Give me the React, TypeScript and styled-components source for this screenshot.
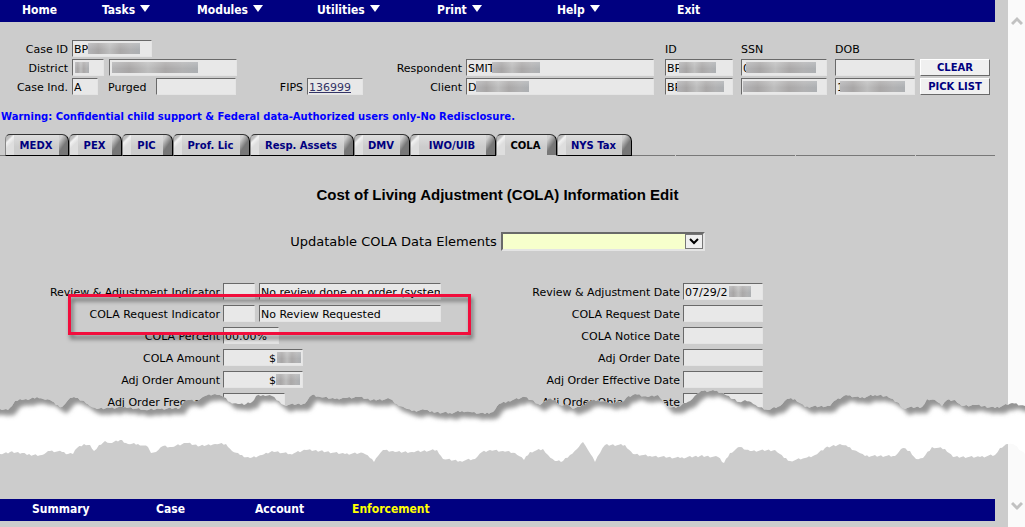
import React, { useId } from "react";
import styled, { createGlobalStyle, css } from "styled-components";

const GlobalStyle = createGlobalStyle`
  * { box-sizing: border-box; }
  html, body { margin: 0; padding: 0; }
  body {
    background: #cccccc;
    color: #000;
    font-family: "DejaVu Sans", Verdana, sans-serif;
    font-size: 11px;
    line-height: 17px;
  }
`;

const Page = styled.div`
  position: relative;
  display: flex;
  min-height: 100vh;
  overflow: hidden;
`;

const Main = styled.main`
  flex: 1;
  min-width: 0;
  display: flex;
  flex-direction: column;
  padding-right: 13px;
`;

const NavBar = styled.nav<{ $bottom?: boolean }>`
  display: flex;
  height: 22px;
  flex: none;
  padding: 0 0 2px ${(p) => (p.$bottom ? 32 : 22)}px;
  background: #000080;
  ${(p) => p.$bottom && css`margin-top: auto; margin-bottom: 6px;`}
`;

const NavLink = styled.a<{ $width: number; $active?: boolean }>`
  display: flex;
  gap: 5px;
  width: ${(p) => p.$width}px;
  color: ${(p) => (p.$active ? "#ffff00" : "#fff")};
  font: bold 12px/20px "DejaVu Sans Condensed", Tahoma, sans-serif;
  text-decoration: none;
`;

const Caret = styled.span`
  margin-top: 5px;
  height: 7px;
  border: 5px solid transparent;
  border-top: 7px solid #fff;
  border-bottom: 0;
`;

const CaseHeader = styled.section`
  display: flex;
  padding: 18px 5px 0 0;
`;

const CaseGrid = styled.div<{ $columns: string; $gap: number; $before?: number; $grow?: boolean }>`
  display: grid;
  grid-template-columns: ${(p) => p.$columns};
  grid-template-rows: repeat(3, 17px);
  gap: 2px ${(p) => p.$gap}px;
  margin-left: ${(p) => p.$before ?? 0}px;
  flex: ${(p) => (p.$grow ? "1" : "none")};
`;

const Group = styled.div<{ $gap?: number }>`
  display: flex;
  gap: ${(p) => p.$gap ?? 5}px;
`;

const Label = styled.label<{ $start?: boolean }>`
  height: 17px;
  line-height: 19px;
  text-align: ${(p) => (p.$start ? "left" : "right")};
  white-space: nowrap;
`;

const Spacer = styled.span<{ $span: number }>`
  grid-column: span ${(p) => p.$span};
`;

const FieldBox = styled.span<{ $width?: number }>`
  position: relative;
  display: block;
  flex: none;
  width: ${(p) => (p.$width ? `${p.$width}px` : "100%")};
  height: 17px;
`;

const FieldInput = styled.input<{ $link?: boolean; $right?: number }>`
  display: block;
  width: 100%;
  height: 17px;
  padding: 1px ${(p) => p.$right ?? 0}px 0 1px;
  border: 1px solid #e4e4e4;
  border-top-color: #696969;
  border-left-color: #696969;
  border-radius: 0;
  outline: 0;
  background: #e8e8e8;
  color: ${(p) => (p.$link ? "#333366" : "#000")};
  font: inherit;
  text-align: ${(p) => (p.$right ? "right" : "left")};
  text-decoration: ${(p) => (p.$link ? "underline" : "none")};
`;

const Smudge = styled.span<{ $left: number; $width: number }>`
  position: absolute;
  top: 3px;
  left: ${(p) => p.$left}px;
  width: ${(p) => p.$width}px;
  height: 11px;
  background:
    linear-gradient(rgba(255, 255, 255, 0.2), transparent 60%),
    linear-gradient(90deg, #b4b4b6, #a8a6a6 20%, #bebebe 42%, #aaa8a8 62%, #b2b2b3 82%, #acafb2);
`;

const PushButton = styled.button`
  height: 17px;
  padding: 0;
  border: 1px solid #fff;
  border-right-color: #696969;
  border-bottom-color: #696969;
  background: #f0f0f0;
  color: #000080;
  font: bold 10px/15px "DejaVu Sans", Verdana, sans-serif;
`;

const Warning = styled.p`
  margin: 15px 0 10px 1px;
  color: #0000ff;
  font-size: 10px;
  font-weight: bold;
  line-height: 14px;
`;

const TabStrip = styled.nav`
  display: flex;
  padding-left: 5px;
  background: linear-gradient(90deg, #787878 119px, #cccccc 119px) 76px 21px / 120px 1px repeat-x;
`;

const Tab = styled.a<{ $width: number; $active?: boolean }>`
  width: ${(p) => p.$width}px;
  height: 22px;
  padding-right: 2px;
  border: 1px solid;
  border-color: #333 #000 ${(p) => (p.$active ? "#ccc" : "#000")} #888;
  border-radius: 5px 7px 0 0;
  background:
    linear-gradient(125deg, #cfcfcf 0 3px, #777 10px) right / 9px 100% no-repeat,
    linear-gradient(135deg, #bdbdbd 0 4px, #f2f2f2 6px, #dedede 10px) left / 8px 100% no-repeat,
    linear-gradient(#dedede, #cccccc 60%);
  color: ${(p) => (p.$active ? "#000" : "#000080")};
  font-size: 10px;
  font-weight: bold;
  line-height: 22px;
  text-align: center;
  text-decoration: none;
  white-space: nowrap;
`;

const Title = styled.h1`
  margin: 29px 0 26px;
  font: bold 15px/20px "Liberation Sans", Arial, sans-serif;
  text-align: center;
`;

const Picker = styled.div`
  display: flex;
  justify-content: center;
  align-items: center;
  gap: 4px;
  font-size: 13px;
  line-height: 21px;
`;

const SelectShell = styled.span`
  position: relative;
  width: 204px;
  height: 19px;
`;

const Select = styled.select`
  display: block;
  appearance: none;
  width: 100%;
  height: 100%;
  border: 2px solid #e4e4e4;
  border-top-color: #696969;
  border-left-color: #696969;
  border-radius: 0;
  background: #f7ffcc;
`;

const SelectButton = styled.span`
  position: absolute;
  top: 2px;
  right: 2px;
  width: 18px;
  height: 15px;
  display: grid;
  place-items: center;
  border: 1px solid #777;
  background: #f0f0f0;
  pointer-events: none;
`;

const FormColumns = styled.form`
  display: flex;
  margin-top: 31px;
`;

const FormColumn = styled.div<{ $width: number }>`
  width: ${(p) => p.$width}px;
  display: flex;
  flex-direction: column;
  gap: 5px;
`;

const FormRow = styled.div<{ $label: number }>`
  position: relative;
  display: grid;
  grid-template-columns: ${(p) => p.$label}px auto;
  justify-content: start;
  gap: 3px;
`;

const Callout = styled.span`
  position: absolute;
  z-index: 1;
  top: -11px;
  left: 68px;
  width: 403px;
  height: 41px;
  border: 3px solid #f20d3c;
  filter: drop-shadow(2px 4px 2px rgba(0, 0, 0, 0.5));
  pointer-events: none;
`;

const ScrollTrack = styled.div`
  width: 17px;
  flex: none;
  display: flex;
  flex-direction: column;
  align-items: center;
  justify-content: space-between;
  padding: 16px 0;
  background: #fafafa;
`;

const Tear = styled.svg`
  position: absolute;
  z-index: 2;
  top: 385px;
  left: 0;
  width: 100%;
  height: 85px;
  pointer-events: none;
`;

type Point = [number, number];

const upperEdge: Point[] = [
  [0,409],[8,410],[12,406],[15,401],[20,399],[28,400],[37,397],[43,399],[50,400],[56,405],[62,407],[65,404],[70,398],[76,398],[84,401],[90,406],[97,409],[110,408],[125,407],[145,410],[160,409],[180,408],[184,402],[188,400],[196,401],[205,396],[215,394],[222,396],[230,402],[238,404],[246,404],[252,402],[256,396],[263,395],[272,396],[279,401],[284,405],[303,404],[307,401],[312,395],[320,397],[335,399],[345,398],[358,397],[372,400],[390,399],[397,404],[405,408],[412,411],[425,410],[430,412],[450,413],[462,411],[470,412],[485,414],[493,412],[499,404],[508,401],[525,397],[531,400],[540,405],[548,399],[555,400],[560,405],[568,405],[573,409],[580,407],[590,401],[598,400],[610,403],[622,402],[626,398],[635,394],[648,397],[658,395],[662,400],[668,407],[676,408],[684,403],[690,401],[697,394],[703,391],[715,391],[723,393],[733,399],[739,402],[745,400],[751,402],[758,407],[768,410],[780,406],[787,399],[795,399],[805,407],[830,406],[834,401],[846,395],[860,398],[875,395],[887,396],[897,402],[903,408],[922,407],[927,399],[935,400],[942,406],[947,400],[955,400],[962,406],[975,405],[995,408],[1012,403],[1025,406],
];

const lowerEdge: Point[] = [
  [0,454],[10,452],[22,453],[27,455],[42,455],[50,451],[62,452],[68,454],[73,454],[77,448],[84,444],[90,445],[94,451],[99,445],[105,441],[110,443],[120,440],[128,444],[138,444],[148,447],[151,453],[156,452],[163,446],[172,447],[186,443],[200,446],[215,444],[226,444],[232,451],[240,455],[250,458],[262,455],[272,451],[290,454],[306,450],[320,451],[345,454],[363,453],[370,458],[374,462],[378,456],[383,450],[395,452],[412,452],[437,450],[443,459],[460,461],[475,459],[482,452],[490,450],[503,451],[515,453],[524,460],[530,452],[543,449],[548,455],[555,461],[563,461],[570,455],[577,449],[583,442],[588,450],[595,462],[600,453],[605,445],[625,445],[633,454],[650,456],[680,458],[700,456],[718,457],[724,463],[730,453],[740,447],[750,451],[775,450],[784,458],[790,461],[805,458],[815,455],[825,448],[840,444],[848,447],[858,452],[865,456],[895,456],[903,448],[910,451],[916,459],[923,458],[932,447],[945,449],[953,457],[980,457],[995,455],[1000,448],[1008,444],[1013,444],[1025,454],
];

// Adds small teeth between the main points so that the edge looks torn.
const roughen = (points: Point[]): Point[] =>
  points.flatMap(([x, y], i) => {
    const next = points[i + 1];
    if (!next) return [[x, y] as Point];
    const steps = Math.max(1, Math.floor((next[0] - x) / 2));
    return Array.from({ length: steps }, (_, s): Point => {
      const px = x + ((next[0] - x) * s) / steps;
      const tooth = s === 0 ? 0 : ((Math.floor(px) * 13 + i * 5) % 7) / 3 - 1;
      return [px, y + ((next[1] - y) * s) / steps + tooth];
    });
  });

const join = (points: Point[]) => points.map((p) => p.join(",")).join(" ");
const upper = roughen(upperEdge);
const gap = join([...upper, [1025, 406], ...roughen(lowerEdge).reverse()]);
const sheet = join([[-20, 350], [-20, 409], ...upper, [1045, 406], [1045, 350]]);

function TornPaper() {
  return (
    <Tear viewBox="0 385 1025 85" preserveAspectRatio="none" aria-hidden="true">
      <defs>
        <clipPath id="gap"><polygon points={gap} /></clipPath>
        <filter id="soft" x="-5%" y="-30%" width="110%" height="160%">
          <feGaussianBlur stdDeviation="2" />
        </filter>
      </defs>
      <polygon points={gap} fill="#fff" />
      <g clipPath="url(#gap)">
        <polygon points={sheet} fill="#949494" filter="url(#soft)" transform="translate(5 6)" />
      </g>
    </Tear>
  );
}

function Chevron({ down }: { down?: boolean }) {
  return (
    <svg width="12" height="10" viewBox="0 0 12 10" aria-hidden="true">
      <path d={down ? "M1 2l5 5 5-5" : "M1 8l5-5 5 5"} fill="none" stroke="#c1c1c1" strokeWidth="3" />
    </svg>
  );
}

type FieldProps = {
  id?: string;
  name?: string;
  value?: string;
  width?: number;
  link?: boolean;
  right?: number;
  smudge?: [number, number];
};

function Field({ id, name, value = "", width, link, right, smudge }: FieldProps) {
  return (
    <FieldBox $width={width}>
      <FieldInput id={id} aria-label={name} value={value} readOnly $link={link} $right={right} />
      {smudge && <Smudge $left={smudge[0]} $width={smudge[1]} />}
    </FieldBox>
  );
}

function Row({ label, offset, fields, callout }: { label: string; offset: number; fields: FieldProps[]; callout?: boolean }) {
  const id = useId();
  return (
    <FormRow $label={offset}>
      <Label htmlFor={id}>{label}</Label>
      <Group $gap={4}>
        {fields.map((f, i) => (
          <Field key={i} {...f} id={i ? undefined : id} name={i ? `${label} description` : undefined} />
        ))}
      </Group>
      {callout && <Callout />}
    </FormRow>
  );
}

const topMenu: [string, number, boolean][] = [
  ["Home", 80, false], ["Tasks", 95, true], ["Modules", 120, true], ["Utilities", 120, true],
  ["Print", 120, true], ["Help", 120, true], ["Exit", 60, false],
];

const bottomMenu: [string, number][] = [["Summary", 124], ["Case", 99], ["Account", 97], ["Enforcement", 100]];

const tabs: [string, number][] = [
  ["MEDX", 64], ["PEX", 53], ["PIC", 51], ["Prof. Lic", 77], ["Resp. Assets", 104],
  ["DMV", 56], ["IWO/UIB", 86], ["COLA", 61], ["NYS Tax", 75],
];

const indicatorRows: { label: string; fields: FieldProps[]; callout?: boolean }[] = [
  { label: "Review & Adjustment Indicator", fields: [{ width: 32 }, { width: 182, value: "No review done on order (system)" }] },
  { label: "COLA Request Indicator", fields: [{ width: 32 }, { width: 182, value: "No Review Requested" }], callout: true },
  { label: "COLA Percent", fields: [{ width: 56, value: "00.00%" }] },
  { label: "COLA Amount", fields: [{ width: 80, value: "$", right: 26, smudge: [54, 24] }] },
  { label: "Adj Order Amount", fields: [{ width: 80, value: "$", right: 26, smudge: [53, 24] }] },
  { label: "Adj Order Frequency", fields: [{ width: 62 }] },
];

const dateRows: { label: string; field: FieldProps }[] = [
  { label: "Review & Adjustment Date", field: { width: 80, value: "07/29/2", smudge: [46, 22] } },
  { label: "COLA Request Date", field: { width: 80 } },
  { label: "COLA Notice Date", field: { width: 80 } },
  { label: "Adj Order Date", field: { width: 80 } },
  { label: "Adj Order Effective Date", field: { width: 80 } },
  { label: "Adj Order Objection Date", field: { width: 80 } },
];

export default function App() {
  return (
    <>
      <GlobalStyle />
      <Page>
        <Main>
          <NavBar>
            {topMenu.map(([text, width, caret]) => (
              <NavLink key={text} href="#" $width={width}>{text}{caret && <Caret />}</NavLink>
            ))}
          </NavBar>

          <CaseHeader>
            <CaseGrid $columns="68px 165px 62px 56px" $gap={4}>
              <Label htmlFor="case-id">Case ID</Label>
              <Field id="case-id" width={80} value="BP" smudge={[16, 52]} />
              <Spacer $span={2} />
              <Label htmlFor="district">District</Label>
              <Group>
                <Field id="district" width={32} smudge={[3, 14]} />
                <Field name="District name" width={128} smudge={[3, 86]} />
              </Group>
              <Spacer $span={2} />
              <Label htmlFor="case-ind">Case Ind.</Label>
              <Group $gap={10}>
                <Field id="case-ind" width={26} value="A" />
                <Label htmlFor="purged" $start>Purged</Label>
                <Field id="purged" width={80} />
              </Group>
              <Label htmlFor="fips">FIPS</Label>
              <Field id="fips" value="136999" link />
            </CaseGrid>
            <CaseGrid $columns="95px 1fr" $gap={4} $before={4} $grow>
              <Spacer $span={2} />
              <Label htmlFor="respondent">Respondent</Label>
              <Field id="respondent" value="SMIT" smudge={[26, 48]} />
              <Label htmlFor="client">Client</Label>
              <Field id="client" value="D" smudge={[10, 53]} />
            </CaseGrid>
            <CaseGrid $columns="68px 86px 80px" $gap={8} $before={11}>
              <Label htmlFor="id-1" $start>ID</Label>
              <Label htmlFor="ssn-1" $start>SSN</Label>
              <Label htmlFor="dob-1" $start>DOB</Label>
              <Field id="id-1" value="BP" smudge={[14, 37]} />
              <Field id="ssn-1" value="0" smudge={[5, 70]} />
              <Field id="dob-1" />
              <Field name="Client ID" value="BP" smudge={[12, 47]} />
              <Field name="Client SSN" smudge={[2, 74]} />
              <Field name="Client DOB" value="1" smudge={[5, 65]} />
            </CaseGrid>
            <CaseGrid $columns="70px" $gap={0} $before={5}>
              <Spacer $span={1} />
              <PushButton type="button">CLEAR</PushButton>
              <PushButton type="button">PICK LIST</PushButton>
            </CaseGrid>
          </CaseHeader>

          <Warning>
            Warning: Confidential child support &amp; Federal data-Authorized users only-No Redisclosure.
          </Warning>

          <TabStrip>
            {tabs.map(([text, width]) => (
              <Tab key={text} href="#" $width={width} $active={text === "COLA"}>{text}</Tab>
            ))}
          </TabStrip>

          <Title>Cost of Living Adjustment (COLA) Information Edit</Title>

          <Picker>
            <label htmlFor="element">Updatable COLA Data Elements</label>
            <SelectShell>
              <Select id="element" defaultValue=""><option value="" /></Select>
              <SelectButton>
                <svg width="10" height="7" viewBox="0 0 10 7" aria-hidden="true">
                  <path d="M1 1l4 4 4-4" fill="none" stroke="#000" strokeWidth="2" />
                </svg>
              </SelectButton>
            </SelectShell>
          </Picker>

          <FormColumns>
            <FormColumn $width={480}>
              {indicatorRows.map((r) => <Row key={r.label} offset={220} {...r} />)}
            </FormColumn>
            <FormColumn $width={283}>
              {dateRows.map((r) => <Row key={r.label} offset={200} label={r.label} fields={[r.field]} />)}
            </FormColumn>
          </FormColumns>

          <NavBar $bottom>
            {bottomMenu.map(([text, width]) => (
              <NavLink key={text} href="#" $width={width} $active={text === "Enforcement"}>{text}</NavLink>
            ))}
          </NavBar>
        </Main>
        <ScrollTrack>
          <Chevron />
          <Chevron down />
        </ScrollTrack>
        <TornPaper />
      </Page>
    </>
  );
}
